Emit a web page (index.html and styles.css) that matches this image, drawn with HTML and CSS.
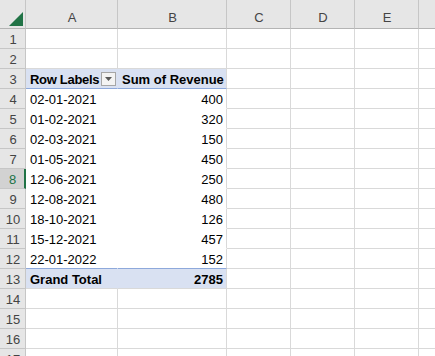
FILE: index.html
```html
<!DOCTYPE html>
<html lang="en">

<head>
    <meta charset="utf-8">
    <meta name="viewport" content="width=device-width, initial-scale=1.0">
    <title>Pivot - Sum of Revenue</title>
    <link rel="stylesheet" href="styles.css">
</head>

<body>

    <table class="sheet">
        <colgroup>
            <col class="c-num">
            <col class="c-a">
            <col class="c-b">
            <col class="c-std">
            <col class="c-std">
            <col class="c-std">
            <col class="c-std">
        </colgroup>
        <thead>
            <tr class="colhead">
                <th class="corner">
                    <svg width="14" height="14" viewBox="0 0 14 14"><polygon points="14,0 14,14 0,14" fill="#217346" /></svg>
                </th>
                <th>A</th>
                <th>B</th>
                <th>C</th>
                <th>D</th>
                <th>E</th>
                <th></th>
            </tr>
        </thead>
        <tbody>
            <tr>
                <th>1</th><td></td><td></td><td></td><td></td><td></td><td></td>
            </tr>
            <tr>
                <th>2</th><td></td><td></td><td></td><td></td><td></td><td></td>
            </tr>
            <tr class="pv-head">
                <th>3</th>
                <td class="pv">
                    <div class="lbl-cell">
                        <span class="lbl">Row Labels</span>
                        <span class="drop"><svg width="7" height="4" viewBox="0 0 7 4"><polygon points="0,0 7,0 3.5,4" fill="#595959" /></svg></span>
                    </div>
                </td>
                <td class="pv">Sum of Revenue</td>
                <td></td><td></td><td></td><td></td>
            </tr>
            <tr class="pv-row">
                <th>4</th><td>02-01-2021</td><td class="num">400</td><td></td><td></td><td></td><td></td>
            </tr>
            <tr class="pv-row">
                <th>5</th><td>01-02-2021</td><td class="num">320</td><td></td><td></td><td></td><td></td>
            </tr>
            <tr class="pv-row">
                <th>6</th><td>02-03-2021</td><td class="num">150</td><td></td><td></td><td></td><td></td>
            </tr>
            <tr class="pv-row">
                <th>7</th><td>01-05-2021</td><td class="num">450</td><td></td><td></td><td></td><td></td>
            </tr>
            <tr class="pv-row">
                <th class="active">8</th><td>12-06-2021</td><td class="num">250</td><td></td><td></td><td></td><td></td>
            </tr>
            <tr class="pv-row">
                <th>9</th><td>12-08-2021</td><td class="num">480</td><td></td><td></td><td></td><td></td>
            </tr>
            <tr class="pv-row">
                <th>10</th><td>18-10-2021</td><td class="num">126</td><td></td><td></td><td></td><td></td>
            </tr>
            <tr class="pv-row">
                <th>11</th><td>15-12-2021</td><td class="num">457</td><td></td><td></td><td></td><td></td>
            </tr>
            <tr class="pv-row last">
                <th>12</th><td>22-01-2022</td><td class="num">152</td><td></td><td></td><td></td><td></td>
            </tr>
            <tr class="pv-total">
                <th>13</th><td class="pv">Grand Total</td><td class="pv num">2785</td><td></td><td></td><td></td><td></td>
            </tr>
            <tr>
                <th>14</th><td></td><td></td><td></td><td></td><td></td><td></td>
            </tr>
            <tr>
                <th>15</th><td></td><td></td><td></td><td></td><td></td><td></td>
            </tr>
            <tr>
                <th>16</th><td></td><td></td><td></td><td></td><td></td><td></td>
            </tr>
            <tr>
                <th>17</th><td></td><td></td><td></td><td></td><td></td><td></td>
            </tr>
        </tbody>
    </table>

</body>

</html>
```

FILE: styles.css
```css
body {
    margin: 0px;
    background-color: white;
    overflow: hidden;
    font-family: "Liberation Sans", Arial, sans-serif;
    font-size: 13px;
    color: black;
}

.sheet {
    border-collapse: separate;
    border-spacing: 0;
    table-layout: fixed;
    width: 482px;
}

.c-num {
    width: 26px;
}

.c-a {
    width: 92px;
}

.c-b {
    width: 109px;
}

.c-std {
    width: 64px;
}

.sheet th,
.sheet td {
    box-sizing: border-box;
    height: 20px;
    padding: 0 3px 1px 4px;
    vertical-align: bottom;
    white-space: nowrap;
    overflow: hidden;
    border-right: 1px solid #d9d9d9;
    border-bottom: 1px solid #d9d9d9;
}

/* headers */

.sheet th {
    background-color: #e6e6e6;
    color: #444;
    font-weight: normal;
    text-align: center;
    border-color: #c6c6c6;
}

tbody th {
    padding: 0 0 1px 0;
    border-right-color: #b4b4b4;
}

.colhead th {
    height: 29px;
    padding-bottom: 3px;
    border-bottom-color: #b4b4b4;
}

.colhead th.corner {
    padding: 0 2px 2px 0;
}

.corner svg {
    display: block;
    margin-left: auto;
}

th.active {
    background-color: #d2d2d2;
    color: #217346;
    border-right: 2px solid #217346;
}

/* pivot table */

.pv-head td.pv {
    background-color: #d9e1f2;
    font-weight: bold;
    border-right-color: #d9e1f2;
    border-bottom-color: #8ea9db;
}

.pv-head td.pv:first-of-type {
    padding-right: 1px;
}

.pv-head td.pv + td.pv {
    border-right-color: #d9d9d9;
}

.lbl-cell {
    display: flex;
    align-items: center;
    justify-content: space-between;
}

.lbl {
    letter-spacing: -0.3px;
}

.drop {
    display: flex;
    align-items: center;
    justify-content: center;
    box-sizing: border-box;
    width: 15px;
    height: 14px;
    margin-bottom: 1px;
    background-color: #f3f3f3;
    border: 1px solid #a6a6a6;
}

.pv-row td:nth-child(2),
.pv-row td:nth-child(3) {
    border-bottom-color: white;
}

.pv-row td:nth-child(2) {
    border-right-color: white;
}

.pv-row.last td:nth-child(2),
.pv-row.last td:nth-child(3) {
    border-bottom-color: #8ea9db;
}

.pv-total td.pv {
    background-color: #d9e1f2;
    font-weight: bold;
}

.pv-total td.pv:first-of-type {
    border-right-color: #d9e1f2;
}

.num {
    text-align: right;
}
```
